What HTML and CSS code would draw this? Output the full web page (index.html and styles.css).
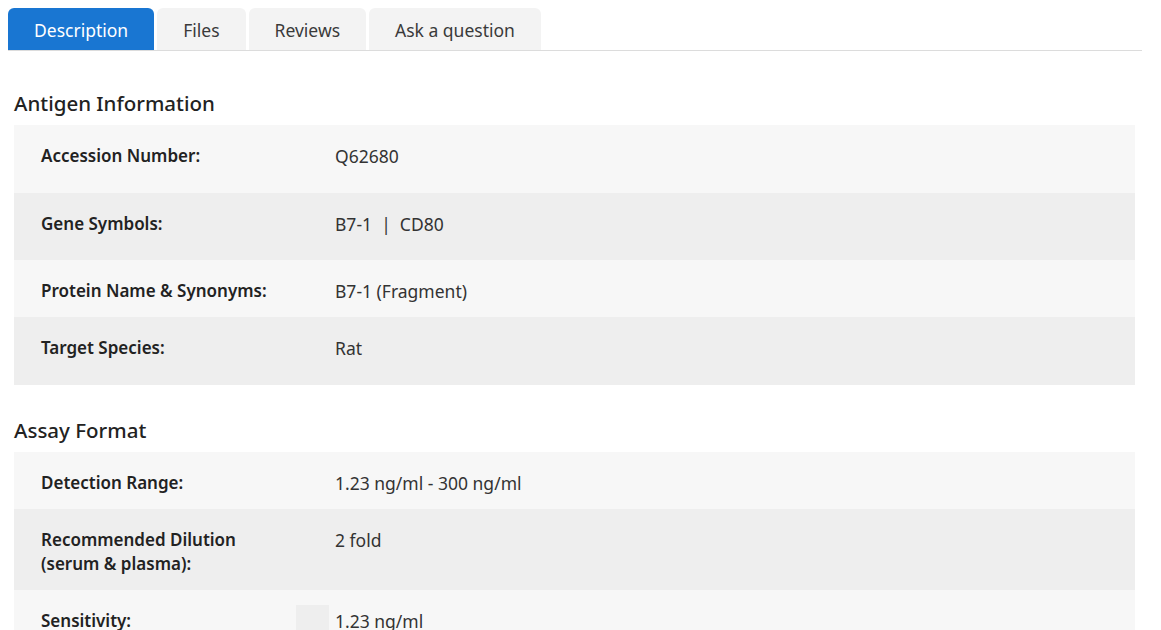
FILE: index.html
```html
<!DOCTYPE html>
<html lang="en">
<head>
  <meta charset="UTF-8" />
  <title>Product details</title>
  <link rel="stylesheet" href="styles.css">
</head>
<body>

  <div class="page">
    <ul class="tabs">
      <li class="tab active">Description</li>
      <li class="tab">Files</li>
      <li class="tab">Reviews</li>
      <li class="tab">Ask a question</li>
    </ul>

    <div class="content">
      <h2 class="first">Antigen Information</h2>
      <div class="spec">
        <div class="row tall">
          <div class="label">Accession Number:</div>
          <div class="value">Q62680</div>
        </div>
        <div class="row tall short">
          <div class="label">Gene Symbols:</div>
          <div class="value">B7-1 &nbsp;|&nbsp; CD80</div>
        </div>
        <div class="row">
          <div class="label">Protein Name &amp; Synonyms:</div>
          <div class="value">B7-1 (Fragment)</div>
        </div>
        <div class="row tall">
          <div class="label">Target Species:</div>
          <div class="value">Rat</div>
        </div>
      </div>

      <h2>Assay Format</h2>
      <div class="spec">
        <div class="row">
          <div class="label">Detection Range:</div>
          <div class="value">1.23 ng/ml - 300 ng/ml</div>
        </div>
        <div class="row">
          <div class="label">Recommended Dilution<br>(serum &amp; plasma):</div>
          <div class="value">2 fold</div>
        </div>
        <div class="row">
          <div class="label">Sensitivity:<span class="tip"></span></div>
          <div class="value">1.23 ng/ml</div>
        </div>
      </div>
    </div>
  </div>

</body>
</html>
```

FILE: styles.css
```css
body {
  margin: 8px;
  font-family: "Noto Sans", "Open Sans", Arial, sans-serif;
  color: #222;
  background: white;
}
.page {
  width: 1134px;
}
.tabs {
  display: flex;
  gap: 3px;
  list-style: none;
  margin: 0;
  padding: 0;
  border-bottom: 1px solid #dcdcdc;
}
.tab {
  height: 42px;
  line-height: 45px;
  padding: 0 26px;
  font-size: 17.5px;
  color: #3a3a3a;
  background: #f3f3f3;
  border-radius: 6px 6px 0 0;
}
.tab.active {
  background: #1976d2;
  color: white;
}
.content {
  padding: 0 7px 0 6px;
}
h2 {
  font-size: 20.5px;
  font-weight: 500;
  line-height: 28px;
  margin: 31px 0 8px;
  color: #222;
}
h2.first {
  margin-top: 38px;
}
.spec {
  font-size: 17px;
  line-height: 24px;
}
.row {
  display: flex;
  background: #f7f7f7;
  padding: 19px 0 14px;
}
.row:nth-child(even) {
  background: #eeeeee;
}
.row.tall {
  padding-bottom: 25px;
}
.row.short {
  padding-bottom: 24px;
}
.label {
  display: flex;
  width: 288px;
  padding-left: 27px;
  font-weight: 600;
  color: #222;
  position: relative;
}
.value {
  padding-left: 6px;
  font-size: 17.5px;
  color: #333;
}
.tip {
  position: absolute;
  right: 0;
  top: -4px;
  width: 33px;
  height: 40px;
  background: #eeeeee;
}
```
